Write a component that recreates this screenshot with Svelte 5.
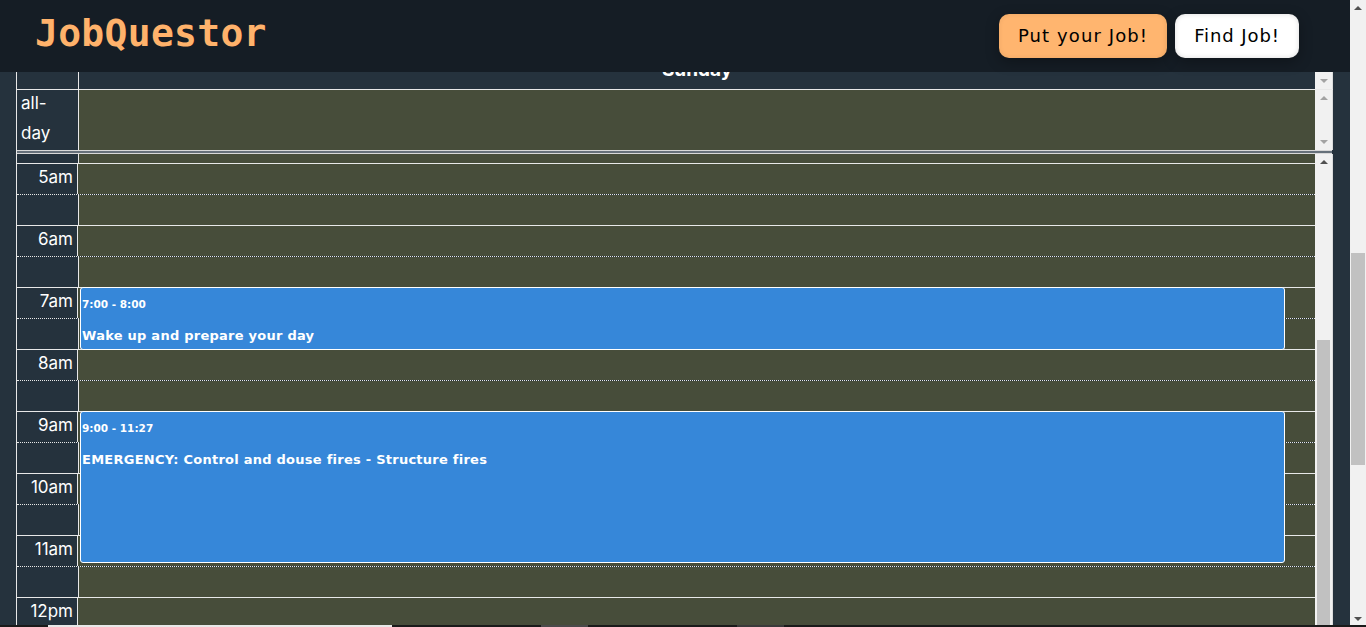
<script>
  const hours = ['5am', '6am', '7am', '8am', '9am', '10am', '11am', '12pm'];
</script>

<div class="page">
  <header class="topbar">
    <div class="logo">JobQuestor</div>
    <div class="actions">
      <button class="btn orange">Put your Job!</button>
      <button class="btn white">Find Job!</button>
    </div>
  </header>

  <main class="content">
    <div class="calendar">
      <div class="head-row">
        <div class="axis"></div>
        <div class="day"><span>Sunday</span></div>
        <div class="bar head-bar"><i class="arrow down light"></i></div>
      </div>

      <div class="allday-row">
        <div class="axis allday-label">all-day</div>
        <div class="allday-cell"></div>
        <div class="bar allday-bar">
          <i class="arrow up light"></i>
          <i class="arrow down light"></i>
        </div>
      </div>

      <div class="divider"></div>

      <div class="body-row">
        <div class="grid">
          <div class="gap-row"><div class="axis"></div><div class="fill"></div></div>
          {#each hours as h}
            <div class="slot">
              <div class="axis time">{h}</div>
              <div class="fill"></div>
            </div>
            <div class="slot half">
              <div class="axis"></div>
              <div class="fill"></div>
            </div>
          {/each}

          <div class="event ev1">
            <div class="ev-time">7:00 - 8:00</div>
            <div class="ev-title">Wake up and prepare your day</div>
          </div>
          <div class="event ev2">
            <div class="ev-time">9:00 - 11:27</div>
            <div class="ev-title">EMERGENCY: Control and douse fires - Structure fires</div>
          </div>
        </div>
        <div class="bar body-bar">
          <i class="arrow up dark"></i>
          <div class="thumb cal-thumb"></div>
        </div>
      </div>
    </div>

    <div class="pagebar">
      <i class="arrow up dark"></i>
      <div class="thumb page-thumb"></div>
      <i class="arrow down dark"></i>
    </div>
  </main>

  <div class="strip">
    <span class="s-light"></span>
    <span class="s-grey one"></span>
    <span class="s-grey two"></span>
  </div>
</div>

<style>
  :global(body) {
    margin: 0;
    overflow: hidden;
  }

  .page {
    width: 1366px;
    height: 627px;
    background: #25323d;
    font-family: "Inter", "DejaVu Sans", sans-serif;
    position: relative;
    overflow: hidden;
  }

  .topbar {
    position: relative;
    z-index: 2;
    height: 72px;
    width: 1350px;
    background: #151d25;
    display: flex;
    justify-content: space-between;
    align-items: flex-start;
    box-sizing: border-box;
    padding: 14px 51px 0 35px;
  }

  .logo {
    font-family: "DejaVu Sans Mono", monospace;
    font-weight: 700;
    font-size: 38px;
    line-height: 38px;
    color: #ffb26b;
    letter-spacing: 0.3px;
  }

  .actions {
    display: flex;
    gap: 8px;
  }

  .btn {
    height: 44px;
    border: 0;
    border-radius: 10px;
    padding: 0 0 2px;
    font-family: "DejaVu Sans", sans-serif;
    font-size: 18px;
    color: #000;
    letter-spacing: 0.9px;
    box-shadow: inset 0 0 5px rgba(0, 0, 0, 0.08), 0 4px 14px rgba(0, 0, 0, 0.3);
  }

  .btn.orange { width: 168px; background: #ffb56f; letter-spacing: 1.1px; }
  .btn.white { width: 124px; background: #fff; box-shadow: inset 0 0 5px rgba(0, 0, 0, 0.15), 0 4px 14px rgba(0, 0, 0, 0.3); }

  .content {
    height: 555px;
    display: flex;
    justify-content: flex-end;
  }

  .calendar {
    width: 1317px;
    margin-right: 33px;
    box-sizing: border-box;
    border-left: 1px solid #e8e8e8;
    position: relative;
  }

  .head-row, .allday-row, .body-row {
    display: flex;
  }

  .axis {
    width: 61px;
    flex: none;
    border-right: 1px solid #e8e8e8;
    color: #fff;
    font-size: 17px;
  }

  .head-row {
    height: 17px;
    border-bottom: 1px solid #e8e8e8;
  }

  .day {
    flex: 1;
    overflow: hidden;
    text-align: center;
    color: #fff;
    font-weight: 700;
    font-size: 19px;
    line-height: 20px;
  }

  .day span {
    display: block;
    margin-top: -12px;
  }

  .bar {
    width: 18px;
    flex: none;
    box-sizing: border-box;
    background: #f1f1f1;
    border-right: 1px solid #dcdcdc;
    position: relative;
  }

  .allday-row {
    height: 60px;
    overflow: hidden;
  }

  .allday-label {
    box-sizing: content-box;
    padding: 0 10px 0 4px;
    width: 47px;
    margin-top: -2px;
    line-height: 30px;
  }

  .allday-cell, .fill {
    flex: 1;
    background: #474d3a;
  }

  .allday-cell {
    margin-top: 0;
  }

  .divider {
    height: 4px;
    border-top: 1px solid #d8d8d8;
    border-bottom: 1px solid #d8d8d8;
    background: #66707a;
    box-sizing: border-box;
    margin-right: 1px;
  }

  .body-row {
    height: 473px;
  }

  .grid {
    flex: 1;
    position: relative;
    overflow: hidden;
  }

  .gap-row {
    display: flex;
    height: 9px;
    border-bottom: 1px solid #e8e8e8;
  }

  .slot {
    display: flex;
    height: 30px;
    border-bottom: 1px dotted #e8e8e8;
  }

  .slot.half {
    border-bottom: 1px solid #e8e8e8;
  }

  .time {
    text-align: right;
    box-sizing: border-box;
    padding-right: 4px;
    line-height: 27px;
  }

  .event {
    position: absolute;
    left: 63px;
    width: 1205px;
    box-sizing: border-box;
    background: #3687d9;
    border: 1px solid #fff;
    border-radius: 3px;
    color: #fff;
    padding: 1px 0 0 1px;
    font-family: "DejaVu Sans", sans-serif;
    font-weight: 700;
  }

  .ev1 { top: 133px; height: 63px; }
  .ev2 { top: 257px; height: 152px; }

  .ev-time {
    font-size: 10.5px;
    line-height: 31px;
  }

  .ev-title {
    font-size: 13px;
    line-height: 31px;
    letter-spacing: 0.25px;
  }

  .body-bar { height: 100%; }

  .thumb {
    position: absolute;
    background: #c1c1c1;
  }

  .cal-thumb {
    left: 2px;
    right: 2px;
    top: 186px;
    bottom: 0;
  }

  .pagebar {
    position: absolute;
    right: 0;
    top: 0;
    bottom: 0;
    width: 16px;
    background: #f1f1f1;
  }

  .page-thumb {
    left: 1px;
    right: 1px;
    top: 253px;
    height: 212px;
  }

  .arrow {
    position: absolute;
    left: 50%;
    margin-left: -4px;
    width: 0;
    height: 0;
    border-left: 4px solid transparent;
    border-right: 4px solid transparent;
  }

  .arrow.up { top: 6px; border-bottom: 4px solid #505050; }
  .arrow.down { bottom: 6px; border-top: 4px solid #505050; }
  .arrow.up.light { border-bottom-color: #a3a3a3; }
  .arrow.down.light { border-top-color: #a3a3a3; }

  .strip {
    position: absolute;
    left: 0;
    right: 0;
    bottom: 0;
    height: 2px;
    background: #1a1a1a;
    z-index: 3;
  }

  .strip span {
    position: absolute;
    top: 0;
    bottom: 0;
  }

  .s-light { left: 48px; width: 344px; background: #e8e8e8; }
  .s-grey { width: 47px; }
  .s-grey.one { left: 541px; background: #4a4a4a; }
  .s-grey.two { left: 737px; background: #3a3a3a; }
</style>
